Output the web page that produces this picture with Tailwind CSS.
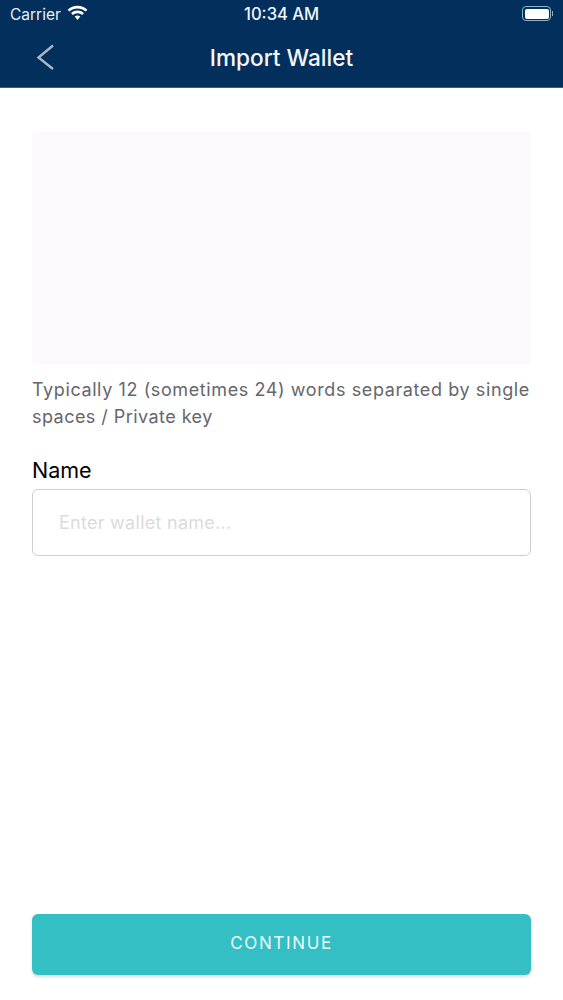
<!doctype html>
<html>
<head>
<meta charset="utf-8">
<script src="https://cdn.jsdelivr.net/npm/@tailwindcss/browser@4"></script>
</head>
<body class="bg-white font-['Inter','Noto_Sans',sans-serif]">
<div class="w-[563px] h-[1000px] flex flex-col overflow-hidden bg-white">
  <header class="h-[88px] shrink-0 bg-[#032f5c] text-white flex flex-col border-b border-[#2f5f85]">
    <div class="h-[29px] relative flex items-center justify-between pl-[10px] pr-[10px]">
      <div class="flex items-center gap-[6px]">
        <span class="text-[15.5px] leading-[29px] text-[#e8f1f7]">Carrier</span>
        <svg width="21" height="16" viewBox="0 0 21 16" class="-mt-[3px]"><path d="M1.5 5.6C6.6 .9 14.4 .9 19.5 5.6" fill="none" stroke="#fff" stroke-width="2.6"/><path d="M4.9 9C8 6.2 13 6.2 16.1 9" fill="none" stroke="#fff" stroke-width="2.6"/><path d="M7.7 11.6 10.5 15 13.3 11.6C11.6 10.2 9.4 10.2 7.7 11.6Z" fill="#fff"/></svg>
      </div>
      <span class="absolute left-[244px] top-0 text-[16.6px] leading-[29px] font-medium text-[#f2f6f9]">10:34 AM</span>
      <div class="flex items-center gap-[1px] -mt-[2px]">
        <div class="w-[29px] h-[15px] rounded-[4px] border border-[#8fb3c9] p-[1.5px]"><div class="w-full h-full rounded-[2px] bg-white"></div></div>
        <div class="w-[1px] h-[5px] bg-[#8fb3c9]"></div>
      </div>
    </div>
    <div class="h-[58px] relative flex items-center justify-center">
      <svg width="20" height="28" viewBox="0 0 20 28" class="absolute left-[36px] top-[14px]"><path d="M17 2.5 2.5 14.5 17 26" fill="none" stroke="#a9b8c6" stroke-width="2.4"/></svg>
      <h1 class="text-[22.6px] leading-[29px] font-medium -mt-[1px] text-[#f3f7fa]">Import Wallet</h1>
    </div>
  </header>
  <main class="flex-1 flex flex-col px-[32px] pt-[44px] pb-[25px]">
    <div class="h-[232px] bg-[#fbf9fc] rounded-[4px]"></div>
    <p class="mt-[12px] text-[18px] leading-[27px] tracking-[0.6px] text-[#66666c] whitespace-nowrap">Typically 12 (sometimes 24) words separated by single<br><span class="tracking-[0.45px]">spaces / Private key</span></p>
    <label class="mt-[25px] text-[21.5px] leading-[30px] text-black">Name</label>
    <div class="mt-[4px] h-[67px] rounded-[6px] border border-[#cfcfd3] flex items-center pl-[26px] text-[18px] tracking-[0.27px] text-[#dcdadf]">Enter wallet name...</div>
    <button class="mt-auto h-[61px] rounded-[6px] bg-[#33bfc4] shadow-[0_2px_3px_rgba(0,0,0,0.15)] text-[#eefafa] text-[17px] tracking-[1.65px] pb-[2px] flex items-center justify-center">CONTINUE</button>
  </main>
</div>
</body>
</html>
